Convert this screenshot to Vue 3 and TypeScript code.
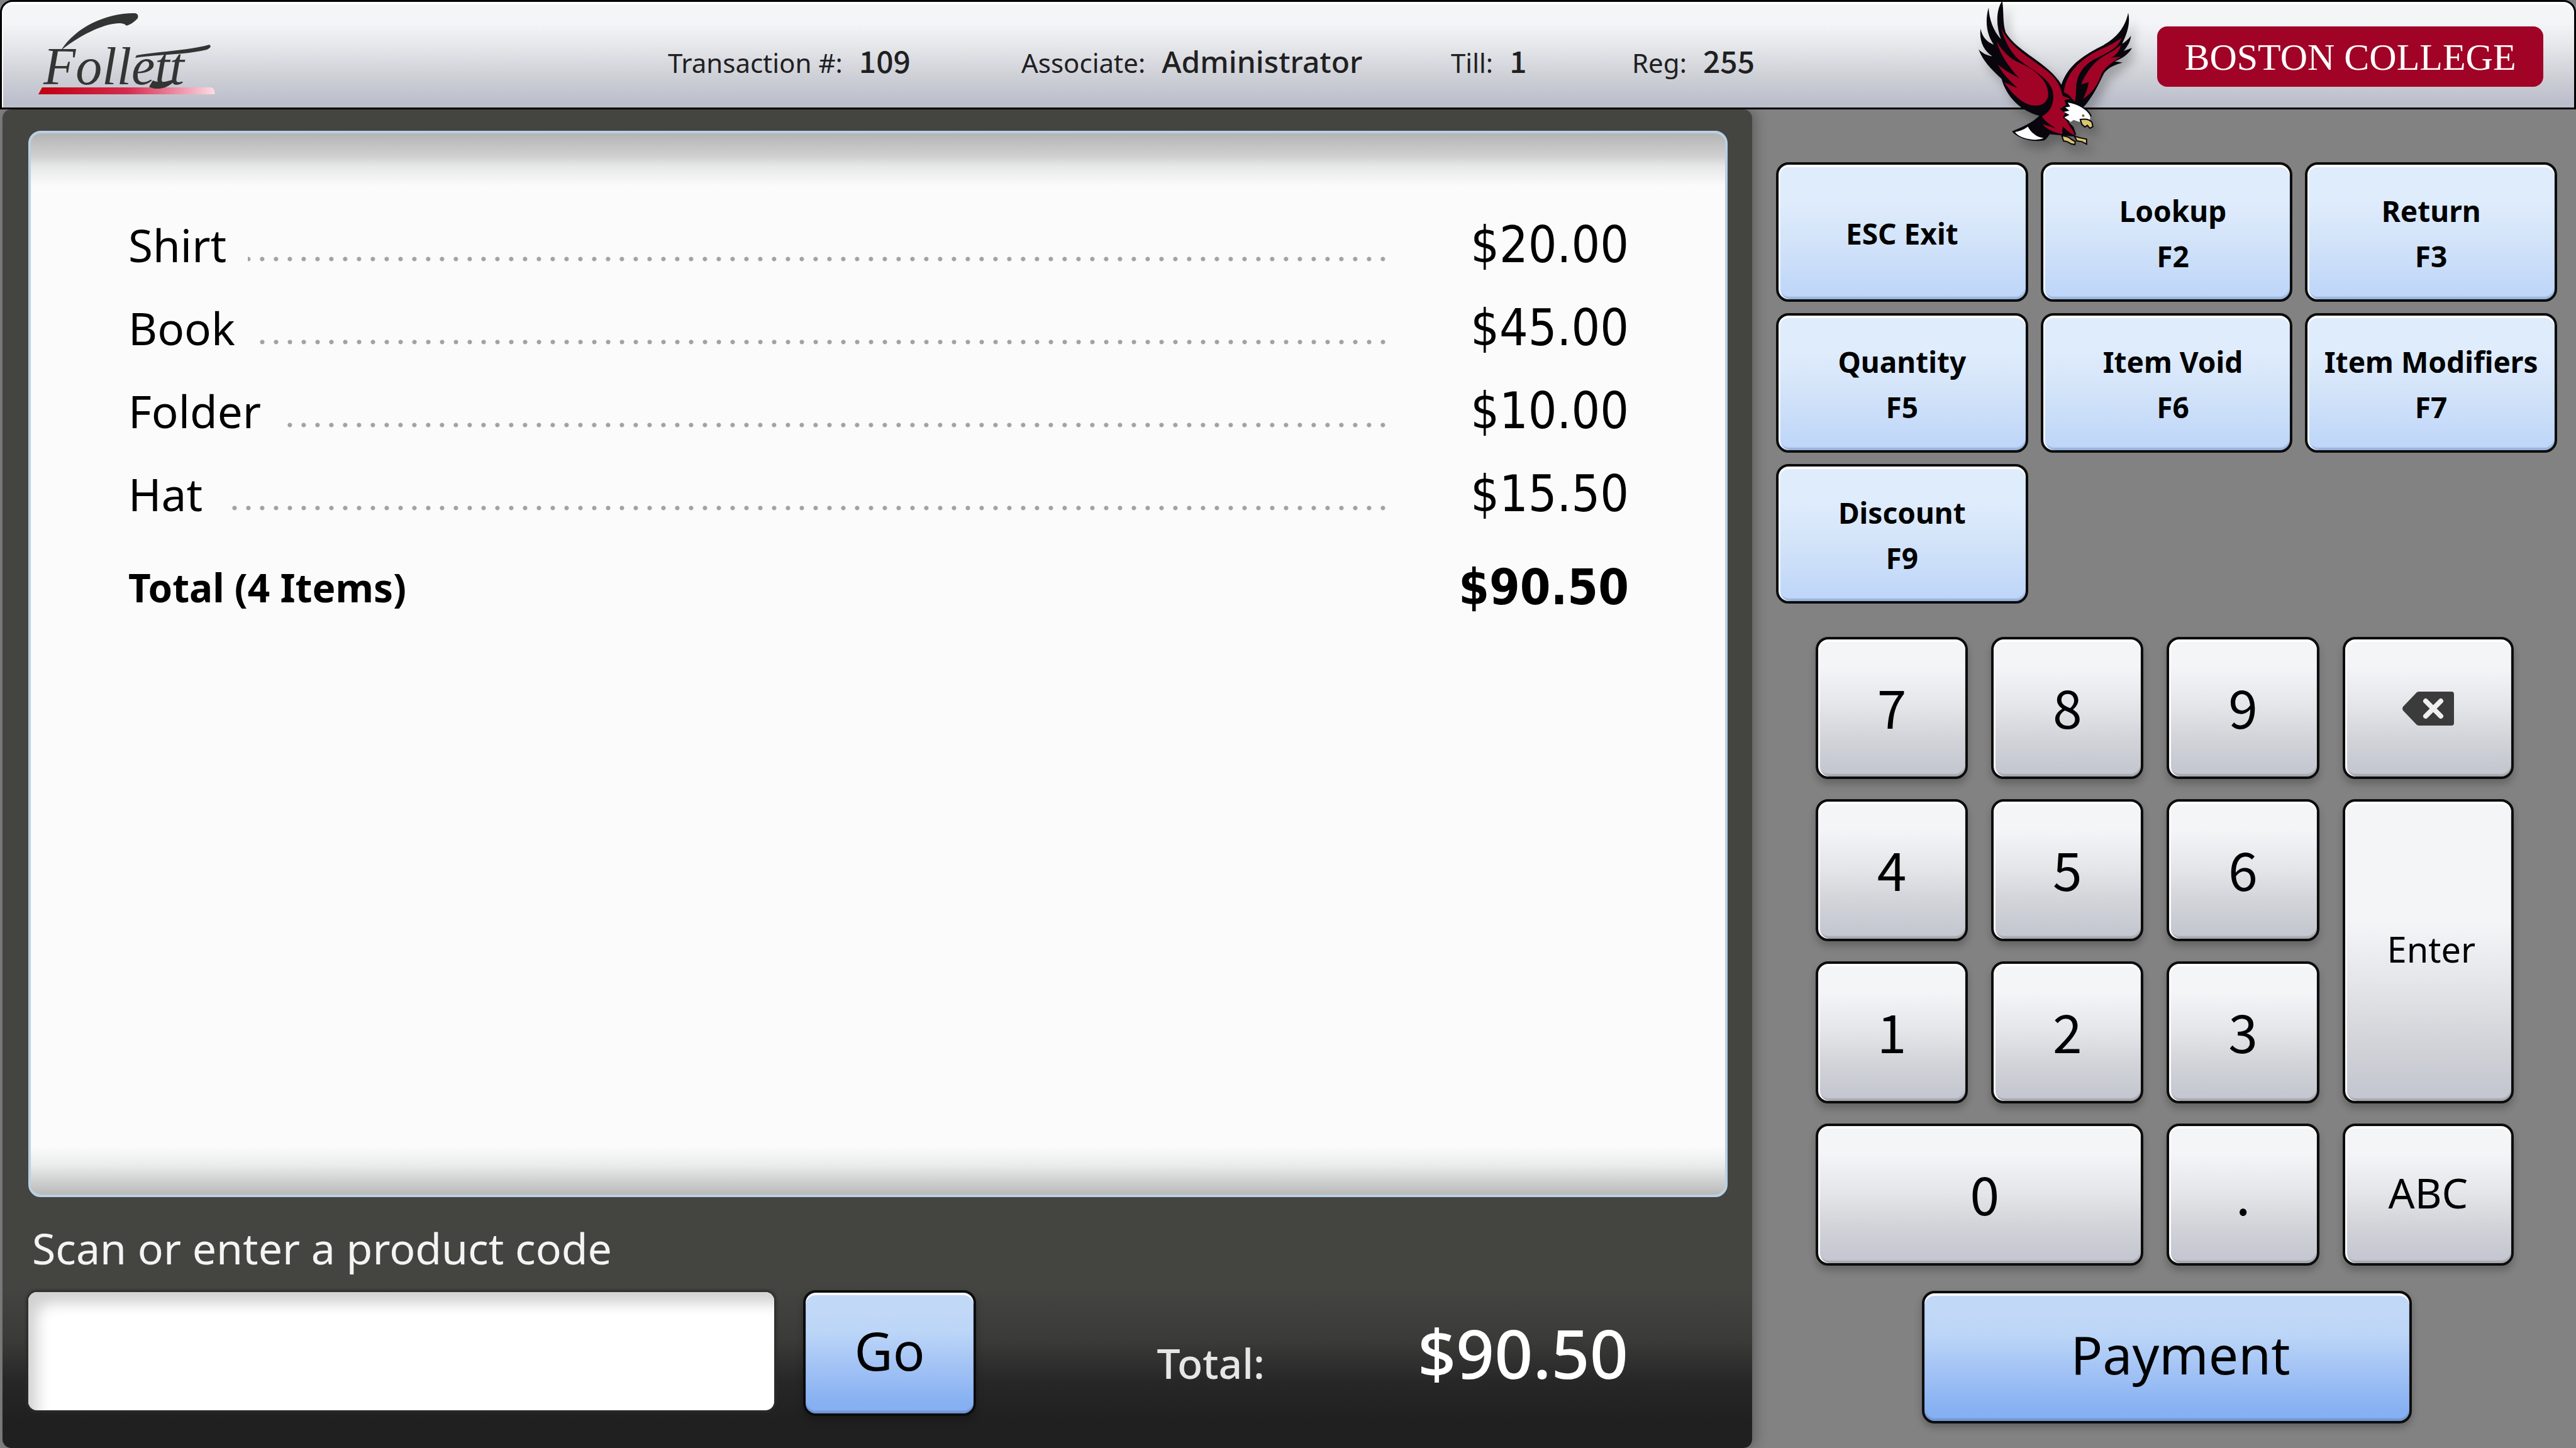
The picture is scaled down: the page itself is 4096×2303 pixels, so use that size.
<script setup lang="ts">
import { computed, ref } from 'vue'

interface LineItem {
  name: string
  price: number
}

interface Command {
  label: string
  hotkey?: string
}

const session = [
  { label: 'Transaction #:', value: '109', numeric: true },
  { label: 'Associate:', value: 'Administrator', numeric: false },
  { label: 'Till:', value: '1', numeric: true },
  { label: 'Reg:', value: '255', numeric: true },
]

const items = ref<LineItem[]>([
  { name: 'Shirt', price: 20 },
  { name: 'Book', price: 45 },
  { name: 'Folder', price: 10 },
  { name: 'Hat', price: 15.5 },
])

const commands: Command[] = [
  { label: 'ESC Exit' },
  { label: 'Lookup', hotkey: 'F2' },
  { label: 'Return', hotkey: 'F3' },
  { label: 'Quantity', hotkey: 'F5' },
  { label: 'Item Void', hotkey: 'F6' },
  { label: 'Item Modifiers', hotkey: 'F7' },
  { label: 'Discount', hotkey: 'F9' },
]

const digitsTop = ['7', '8', '9']
const digitsRest = ['4', '5', '6', '1', '2', '3']

const code = ref('')
const total = computed(() => items.value.reduce((sum, item) => sum + item.price, 0))
const money = (value: number): string => `$${value.toFixed(2)}`

function press(key: string): void {
  code.value += key
}

function erase(): void {
  code.value = code.value.slice(0, -1)
}
</script>

<template>
  <div class="register">
    <header class="topbar">
      <svg class="brand" viewBox="0 0 300 140" role="img" aria-label="Follett">
        <defs>
          <linearGradient id="rule" x1="0" x2="1" y1="0" y2="0">
            <stop offset="0" stop-color="#c00010" />
            <stop offset="0.5" stop-color="#d42a4c" />
            <stop offset="0.8" stop-color="#ee93a8" />
            <stop offset="1" stop-color="#fbdde4" />
          </linearGradient>
        </defs>
        <path d="M0 130 L6 119 L276 119 Q282 124 280 130 Z" fill="url(#rule)" />
        <text x="8" y="114" class="brand-text">Follett</text>
        <path d="M36 60 C60 22 110 0 154 1 Q160 2 158 9 Q150 18 140 21 C132 10 84 22 36 60 Z" fill="#333534" />
        <path d="M156 68 C190 62 240 60 272 51 Q277 55 268 59 C230 68 190 66 154 72 Z" fill="#333534" />
        <path d="M182 108 C198 114 206 108 218 106 C208 122 186 124 176 118 Z" fill="#333534" />
      </svg>

      <p v-for="field in session" :key="field.label" class="field">
        <span>{{ field.label }}</span>
        <strong :class="{ figures: field.numeric }">{{ field.value }}</strong>
      </p>

      <div class="mascot">
        <svg viewBox="130 0 760 710" role="img" aria-label="Eagle">
          <path
            fill="#08060c"
            d="M255 3 C224 50 226 125 249 186 C212 145 194 95 190 36 C172 98 180 165 215 212 C182 202 158 172 152 136 C144 190 164 240 208 268 C182 264 158 252 142 234 C162 290 205 332 252 376 C275 460 340 528 432 552 C400 586 350 606 302 627 C330 662 400 680 456 670 Q466 664 482 640 L540 646 L600 652 L608 640 L596 606 L572 582 L640 515 C690 460 716 400 742 348 C765 318 800 308 830 298 L792 292 C828 280 860 256 875 228 L836 242 C856 216 868 196 870 170 C856 188 842 200 828 208 C852 160 868 110 857 60 C842 132 800 180 738 215 C650 258 568 310 538 404 C478 300 330 250 272 155 C256 110 264 50 255 3 Z"
          />
          <path
            fill="#a00326"
            d="M250 132 C296 235 410 285 486 352 C535 400 538 440 545 458 L580 470 L552 478 L560 500 L530 520 L556 540 L545 560 L560 572 C575 600 592 615 602 645 C580 640 560 615 545 605 C540 620 545 640 538 640 C505 630 470 620 448 592 L510 612 C480 592 455 575 445 555 C500 525 505 470 495 430 C475 365 380 325 330 280 C290 240 265 190 250 132 Z"
          />
          <path
            fill="#a00326"
            d="M228 196 C262 255 300 285 352 306 C430 340 478 400 475 452 C470 508 410 514 366 492 C320 466 290 430 264 392 L328 420 C285 380 252 345 235 308 C270 338 300 352 338 374 C288 320 244 260 228 196 Z"
          />
          <path
            fill="#a00326"
            d="M826 180 C810 225 770 245 720 270 C650 300 610 350 608 420 Q608 460 602 484 L572 452 L550 440 C560 340 640 270 740 228 Q790 206 826 180 Z"
          />
          <path
            fill="#a00326"
            d="M822 214 C815 245 800 262 775 275 L822 270 C780 295 748 320 730 350 C715 400 685 445 640 472 Q664 430 668 392 L632 402 C655 350 690 290 760 256 Q795 238 822 214 Z"
          />
          <path
            fill="#fff"
            d="M566 486 C610 495 660 520 676 556 L674 574 L630 570 L624 582 L596 572 L582 582 L552 560 L576 548 L550 534 L576 528 L556 512 L580 508 Z"
          />
          <path d="M566 486 C620 494 668 520 680 556" fill="none" stroke="#08060c" stroke-width="6" />
          <path fill="#fff" d="M316 630 Q350 624 378 604 C390 630 420 655 452 658 Q440 668 400 666 C360 662 330 650 316 630 Z" />
          <path
            fill="#d8c56e"
            stroke="#08060c"
            stroke-width="6"
            d="M628 570 Q670 564 684 584 L688 604 L674 612 L662 598 L650 606 L636 594 Z"
          />
          <circle cx="642" cy="552" r="6" fill="#7a5a26" />
          <path
            fill="#d8c56e"
            stroke="#08060c"
            stroke-width="6"
            d="M540 648 Q570 650 584 664 L604 676 L602 690 L584 686 L566 676 L548 672 Z M600 650 L630 658 L658 664 L658 688 L636 676 L612 672 Z"
          />
        </svg>
      </div>

      <div class="campus">BOSTON COLLEGE</div>
    </header>

    <main class="workspace">
      <section class="sale">
        <div class="receipt">
          <table>
            <tbody>
              <tr v-for="item in items" :key="item.name">
                <th scope="row">
                  <div class="entry"><span>{{ item.name }}</span><i class="leader"></i></div>
                </th>
                <td>{{ money(item.price) }}</td>
              </tr>
            </tbody>
            <tfoot>
              <tr>
                <th scope="row">Total ({{ items.length }} Items)</th>
                <td>{{ money(total) }}</td>
              </tr>
            </tfoot>
          </table>
        </div>

        <label class="prompt" for="code">Scan or enter a product code</label>
        <form class="entry-row" @submit.prevent>
          <input id="code" v-model="code" type="text" autocomplete="off" />
          <button type="submit" class="btn primary">Go</button>
          <p class="due">
            <span>Total:</span>
            <strong>{{ money(total) }}</strong>
          </p>
        </form>
      </section>

      <aside class="controls">
        <div class="commands">
          <button v-for="cmd in commands" :key="cmd.label" type="button" class="btn command">
            <span>{{ cmd.label }}</span>
            <span v-if="cmd.hotkey">{{ cmd.hotkey }}</span>
          </button>
        </div>

        <div class="keypad">
          <button v-for="d in digitsTop" :key="d" type="button" class="btn key figures" @click="press(d)">{{ d }}</button>
          <button type="button" class="btn key" aria-label="Backspace" @click="erase">
            <svg class="backspace" viewBox="0 0 82 54">
              <path fill="#3b3b3b" d="M26 0 H78 Q82 0 82 4 V50 Q82 54 78 54 H26 Q23 54 21 51 L1 30 Q-1 27 1 24 L21 3 Q23 0 26 0 Z" />
              <path stroke="#efeff1" stroke-width="8" stroke-linecap="round" d="M37 15 L61 39 M61 15 L37 39" />
            </svg>
          </button>
          <button v-for="d in digitsRest" :key="d" type="button" class="btn key figures" @click="press(d)">{{ d }}</button>
          <button type="button" class="btn key enter">Enter</button>
          <button type="button" class="btn key figures zero" @click="press('0')">0</button>
          <button type="button" class="btn key figures" @click="press('.')">.</button>
          <button type="button" class="btn key letters">ABC</button>
        </div>

        <button type="button" class="btn primary payment">Payment</button>
      </aside>
    </main>
  </div>
</template>

<style>
body {
  background: #828282;
}
</style>

<style scoped>
.register {
  display: flex;
  flex-direction: column;
  min-height: 100vh;
  background: #828282;
  color: #000;
  font-family: 'Noto Sans', 'Open Sans', sans-serif;
}

.register * {
  box-sizing: border-box;
}

p {
  margin: 0;
}

.figures {
  font-family: 'Noto Sans CJK SC', 'Noto Sans', sans-serif;
}

/* Top bar */
.topbar {
  position: relative;
  z-index: 1;
  display: grid;
  grid-template-columns: 1059fr 562fr 683fr 288fr 547fr 288fr 614fr 49fr;
  height: 174px;
  border: 3px solid #000;
  border-radius: 20px 20px 0 0;
  background: linear-gradient(#f4f5f7 20%, #e7e8ec 40%, #d0d2d8 68%, #bbbecb 96%);
  box-shadow: inset 0 4px #fff, inset 2px 0 #fff;
}

.brand {
  width: 300px;
  height: 140px;
  margin: 17px 0 0 58px;
}

.brand-text {
  font: italic 84px 'Liberation Serif', serif;
  fill: #333534;
}

.field {
  display: flex;
  align-items: baseline;
  align-self: baseline;
  gap: 26px;
  padding-top: 60px;
  color: #202022;
  font-size: 42px;
  line-height: 64px;
  white-space: nowrap;
}

.field strong {
  font-size: 48px;
  font-weight: 500;
}

.mascot {
  position: relative;
}

.mascot svg {
  position: absolute;
  top: -3px;
  left: 0;
  width: 253px;
  height: 237px;
  filter: drop-shadow(8px 12px 8px rgba(0, 0, 0, 0.25));
}

.campus {
  height: 96px;
  margin-top: 39px;
  border-radius: 16px;
  background: #a00326;
  color: #fff;
  font-family: 'Liberation Serif', serif;
  font-size: 60px;
  line-height: 98px;
  text-align: center;
  white-space: nowrap;
}

/* Sale panel */
.workspace {
  display: grid;
  flex: 1;
  grid-template-columns: 2782fr 1310fr;
  padding-left: 4px;
}

.sale {
  display: flex;
  flex-direction: column;
  padding: 34px 39px 51px 41px;
  border-radius: 14px;
  background: linear-gradient(#444441 88%, #3a3a39 92%, #272727 95%, #202020 98%);
  box-shadow: 4px 0 20px rgba(0, 0, 0, 0.3);
}

.receipt {
  flex: 1;
  padding: 112px 153px 0 155px;
  border: 4px solid #b9d0e2;
  border-radius: 20px;
  background:
    linear-gradient(#b4b4b4, #cfcfcf 36px, #e6e7e7 52px, rgba(251, 251, 251, 0) 84px),
    linear-gradient(to top, #b9b9b9, #d4d5d5 26px, #ebecec 48px, rgba(251, 251, 251, 0) 76px),
    #fbfbfb;
}

table {
  width: 100%;
  border-collapse: collapse;
}

th,
td {
  height: 132px;
  padding: 0;
  font-weight: 400;
  line-height: 132px;
}

th {
  font-size: 71px;
  text-align: left;
}

td {
  width: 380px;
  font-family: 'DejaVu Sans Condensed', 'DejaVu Sans', sans-serif;
  font-size: 80px;
  text-align: right;
}

.entry {
  display: flex;
  align-items: center;
  gap: 34px;
}

.leader {
  flex: 1;
  height: 8px;
  margin-top: 44px;
  background: radial-gradient(circle, #a2a2a2 3px, transparent 4px) right center / 22px 8px repeat-x;
}

tfoot th,
tfoot td {
  height: 164px;
  font-weight: 700;
  line-height: 164px;
}

tfoot th {
  font-size: 62px;
}

tfoot td {
  font-size: 78px;
}

.prompt {
  margin: 33px 0 19px 6px;
  color: #f4f4f4;
  font-size: 68px;
  line-height: 96px;
}

.entry-row {
  display: grid;
  grid-template-columns: 1186fr 276fr 1149fr;
  align-items: center;
  gap: 46px;
  height: 200px;
}

input {
  width: 100%;
  height: 188px;
  margin-bottom: 6px;
  padding: 0 40px;
  border: 0;
  border-radius: 14px;
  background: #fff;
  box-shadow: inset 22px 26px 22px -8px #d2d2d2, 0 0 4px 3px #2c2c2c;
  font: 72px 'Noto Sans', sans-serif;
}

.due {
  display: flex;
  align-items: baseline;
  justify-content: space-between;
  padding: 0 158px 0 241px;
  color: #fff;
  white-space: nowrap;
}

.due span {
  color: #e6e6e6;
  font-size: 66px;
  font-weight: 500;
}

.due strong {
  font-size: 107px;
  font-weight: 500;
  line-height: 140px;
}

/* Buttons */
.btn {
  display: flex;
  flex-direction: column;
  align-items: center;
  justify-content: center;
  margin: 0;
  padding: 0;
  border: 4px solid #0c0c0c;
  border-radius: 20px;
  color: #000;
  font-family: 'Noto Sans', 'Open Sans', sans-serif;
  white-space: nowrap;
}

.btn.figures {
  font-family: 'Noto Sans CJK SC', 'Noto Sans', sans-serif;
}

.primary {
  height: 100%;
  padding-bottom: 10px;
  background: linear-gradient(#c2d8f7 15%, #bcd6f7 32%, #a3c3f5 60%, #86b0f2 92%);
  box-shadow: inset 0 4px #f4f9ff, inset 0 -4px 2px #7096d2, 0 6px 12px rgba(0, 0, 0, 0.25);
  font-size: 84px;
}

.controls {
  padding: 84px 30px 38px 38px;
}

.commands {
  display: grid;
  grid-template-columns: repeat(3, 1fr);
  grid-auto-rows: 222px;
  gap: 18px 20px;
}

.command {
  padding-top: 4px;
  background: linear-gradient(#dfecfc 25%, #d5e5f9 52%, #c0d7f9 94%);
  box-shadow: inset 0 4px #fff, inset 3px 0 #eef5fe, inset 0 -4px 2px #98b4dc;
  font-size: 46px;
  font-weight: 700;
  line-height: 72px;
}

.command:nth-child(3n + 2) {
  padding-left: 20px;
}

.keypad {
  display: grid;
  grid-template-columns: 242fr 242fr 242fr 272fr;
  grid-auto-rows: 226px;
  gap: 32px 37px;
  margin: 53px 69px 0 63px;
}

.key {
  padding-bottom: 8px;
  background: linear-gradient(#f4f5f7 20%, #e4e6ea 48%, #d2d4d9 72%, #c5c8d0 94%);
  box-shadow: inset 0 4px #fff, inset 3px 0 #fafafc, inset 0 -4px 2px #a6a8ae, 0 8px 12px rgba(0, 0, 0, 0.22);
  font-size: 84px;
}

.backspace {
  width: 82px;
  height: 54px;
  margin-top: 10px;
}

.enter {
  grid-row: 2 / span 2;
  grid-column: 4;
  padding-left: 10px;
  background: linear-gradient(#f4f5f7 40%, #e4e6ea 60%, #d2d4d9 80%, #c5c8d0 96%);
  font-size: 56px;
}

.zero {
  grid-column: span 2;
  padding-left: 16px;
}

.letters {
  font-size: 66px;
}

.payment {
  width: 779px;
  height: 211px;
  margin: 40px auto 0;
  padding-left: 44px;
}
</style>
